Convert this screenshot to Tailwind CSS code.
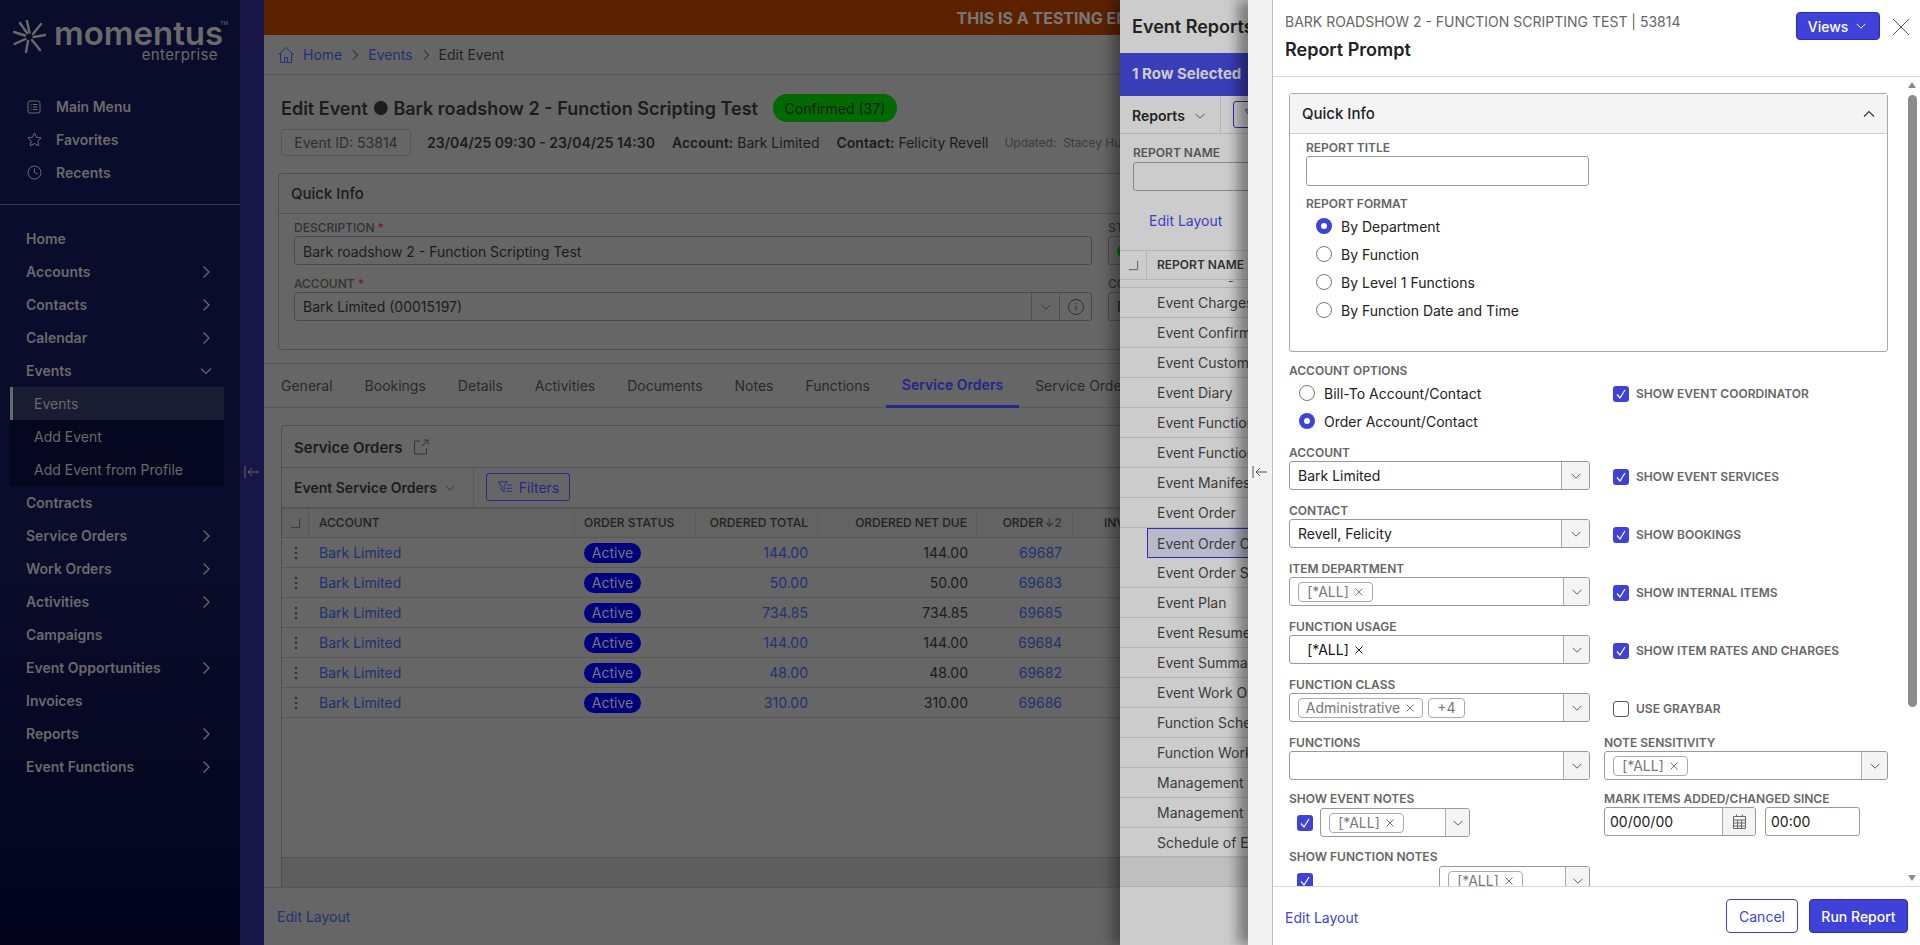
<!DOCTYPE html>
<html lang="en">
<head>
  <meta charset="UTF-8">
  <title>Edit Event - Report Prompt</title>
  <script src="https://cdn.jsdelivr.net/npm/@tailwindcss/browser@4"></script>
</head>
<body class="h-[945px] w-[1920px] overflow-hidden relative flex [font-family:Inter,sans-serif] text-[14px] bg-[#666]">
  <!-- icon sprite -->
  <svg class="hidden">
    <symbol id="chev-d" viewBox="0 0 16 16"><path d="M3 5.500l5 5 5-5" fill="none" stroke="currentColor" stroke-width="1.100"/></symbol>
    <symbol id="chev-u" viewBox="0 0 16 16"><path d="M3 10.500l5-5 5 5" fill="none" stroke="currentColor" stroke-width="1.100"/></symbol>
    <symbol id="chev-r" viewBox="0 0 16 16"><path d="M5.500 2.500l5.500 5.500-5.500 5.500" fill="none" stroke="currentColor" stroke-width="1.300"/></symbol>
    <symbol id="times" viewBox="0 0 10 10"><path d="M1.500 1.500l7 7M8.500 1.500l-7 7" fill="none" stroke="currentColor" stroke-width="1"/></symbol>
    <symbol id="check" viewBox="0 0 16 16"><path d="M4 8.500l3 3.500 5-8" fill="none" stroke="#fff" stroke-width="1.200"/></symbol>
    <symbol id="collapse" viewBox="0 0 16 14"><path d="M1 1v12M15 7H4M8 3L4 7l4 4" fill="none" stroke="currentColor" stroke-width="1"/></symbol>
    <symbol id="corner" viewBox="0 0 12 12"><path d="M1 10.500h9.500V1" fill="none" stroke="currentColor" stroke-width="1"/></symbol>
    <symbol id="filter" viewBox="0 0 18 16"><path d="M1.500 2h10L8 7.500V13l-3-1.500v-4zM12 6h5M10.500 9.500H17M10 13h7" fill="none" stroke="currentColor" stroke-width="1"/></symbol>
    <symbol id="kebab" viewBox="0 0 4 14"><circle cx="2" cy="2" r="1.100" fill="currentColor"/><circle cx="2" cy="7" r="1.100" fill="currentColor"/><circle cx="2" cy="12" r="1.100" fill="currentColor"/></symbol>
  </svg>

  <!-- sidebar -->
  <aside class="w-[240px] h-full shrink-0 bg-gradient-to-b from-[#0a0c2b] from-60% to-[#03041c] text-[#6a6a6a]">
    <div class="h-[90px] pl-[13px] pt-[20px] flex items-start">
      <svg class="w-[33px] h-[33px] shrink-0" viewBox="0 0 33 33">
        <g stroke="#6a6a6a" stroke-width="2.400" stroke-linecap="round">
          <path d="M16.500 12.500L14 1M20 14l8-10M20.500 17l12-2M19 20l8 10M15 21l-2 11M12.500 19l-11 5M12 15.500L1 12M14 13L7 3"/>
        </g>
      </svg>
      <div class="ml-[8px] w-[166px] flex flex-col items-end relative">
        <div class="w-full text-[33px] leading-[26px] font-semibold">momentus</div>
        <div class="text-[15px] leading-[15px] mt-[1px] mr-[2px] tracking-[0.4px]">enterprise</div>
        <div class="absolute right-[-8px] top-0 text-[5px] leading-[6px]">TM</div>
      </div>
    </div>
    <nav class="font-semibold border-b border-[#3a3b50] pb-[15px]">
      <a class="h-[33px] pl-[27px] flex items-center gap-[15px]">
        <svg class="w-[14px] h-[14px] shrink-0" viewBox="0 0 14 14"><rect x="1" y="1" width="12" height="12" rx="2" fill="none" stroke="currentColor"/><path d="M3.500 4.500h1M6 4.500h4.500M3.500 7h1M6 7h4.500M3.500 9.500h1M6 9.500h4.500" stroke="currentColor"/></svg>Main Menu</a>
      <a class="h-[33px] pl-[27px] flex items-center gap-[14px]">
        <svg class="w-[15px] h-[15px] shrink-0" viewBox="0 0 15 15"><path d="M7.500 1l2 4.300 4.700.6-3.400 3.200.9 4.700-4.200-2.300-4.200 2.300.9-4.700L.8 5.900l4.700-.6z" fill="none" stroke="currentColor"/></svg>Favorites</a>
      <a class="h-[33px] pl-[27px] flex items-center gap-[14px]">
        <svg class="w-[15px] h-[15px] shrink-0" viewBox="0 0 15 15"><circle cx="7.500" cy="7.500" r="6.500" fill="none" stroke="currentColor"/><path d="M7.500 3.500v4l3 1.500" fill="none" stroke="currentColor"/></svg>Recents</a>
    </nav>
    <nav class="pt-[17px] font-semibold">
      <a class="h-[33px] pl-[26px] flex items-center">Home</a>
      <a class="h-[33px] pl-[26px] pr-[26px] flex items-center justify-between">Accounts<svg class="w-[16px] h-[16px]"><use href="#chev-r"/></svg></a>
      <a class="h-[33px] pl-[26px] pr-[26px] flex items-center justify-between">Contacts<svg class="w-[16px] h-[16px]"><use href="#chev-r"/></svg></a>
      <a class="h-[33px] pl-[26px] pr-[26px] flex items-center justify-between">Calendar<svg class="w-[16px] h-[16px]"><use href="#chev-r"/></svg></a>
      <a class="h-[33px] pl-[26px] pr-[26px] flex items-center justify-between">Events<svg class="w-[16px] h-[16px]"><use href="#chev-d"/></svg></a>
      <div class="mx-[10px] w-[214px] bg-[#05061f] font-normal">
        <a class="h-[33px] pl-[21px] flex items-center bg-[#1a1c31] border-l-[3px] border-[#6a6a6a]">Events</a>
        <a class="h-[33px] pl-[24px] flex items-center">Add Event</a>
        <a class="h-[33px] pl-[24px] flex items-center">Add Event from Profile</a>
      </div>
      <a class="h-[33px] pl-[26px] flex items-center">Contracts</a>
      <a class="h-[33px] pl-[26px] pr-[26px] flex items-center justify-between">Service Orders<svg class="w-[16px] h-[16px]"><use href="#chev-r"/></svg></a>
      <a class="h-[33px] pl-[26px] pr-[26px] flex items-center justify-between">Work Orders<svg class="w-[16px] h-[16px]"><use href="#chev-r"/></svg></a>
      <a class="h-[33px] pl-[26px] pr-[26px] flex items-center justify-between">Activities<svg class="w-[16px] h-[16px]"><use href="#chev-r"/></svg></a>
      <a class="h-[33px] pl-[26px] flex items-center">Campaigns</a>
      <a class="h-[33px] pl-[26px] pr-[26px] flex items-center justify-between">Event Opportunities<svg class="w-[16px] h-[16px]"><use href="#chev-r"/></svg></a>
      <a class="h-[33px] pl-[26px] flex items-center">Invoices</a>
      <a class="h-[33px] pl-[26px] pr-[26px] flex items-center justify-between">Reports<svg class="w-[16px] h-[16px]"><use href="#chev-r"/></svg></a>
      <a class="h-[33px] pl-[26px] pr-[26px] flex items-center justify-between">Event Functions<svg class="w-[16px] h-[16px]"><use href="#chev-r"/></svg></a>
    </nav>
  </aside>

  <!-- collapse strip -->
  <div class="w-[24px] h-full shrink-0 bg-[#181548] text-[#666] flex justify-center pt-[465px]">
    <svg class="w-[16px] h-[14px]"><use href="#collapse"/></svg>
  </div>

  <!-- event page, dimmed -->
  <main class="w-[1656px] h-full shrink-0 flex flex-col text-[#1c1c1c]">
    <div class="h-[35px] shrink-0 bg-[#5c2200] flex items-center justify-center text-[16px] font-bold text-[#777]">THIS IS A TESTING ENVIRONMENT</div>
    <div class="h-[40px] shrink-0 border-b border-[#585858] pl-[13px] flex items-center text-[#1f3272]">
      <svg class="w-[18px] h-[18px] mr-[8px]" viewBox="0 0 18 18"><path d="M1 9l8-7.500L17 9M3.500 7.500V16.500h11V7.500M7.500 16.500v-5h3v5" fill="none" stroke="currentColor"/></svg>
      <span>Home</span>
      <svg class="w-[14px] h-[14px] mx-[6px] text-[#3a3a3a]"><use href="#chev-r"/></svg>
      <span>Events</span>
      <svg class="w-[14px] h-[14px] mx-[6px] text-[#3a3a3a]"><use href="#chev-r"/></svg>
      <span class="text-[#222]">Edit Event</span>
    </div>
    <div class="pl-[17px] pt-[19px]">
      <div class="h-[28px] flex items-center">
        <h1 class="text-[18px] font-semibold">Edit Event ● Bark roadshow 2 - Function Scripting Test</h1>
        <span class="ml-[15px] h-[28px] w-[124px] rounded-[14px] bg-[#006a00] flex items-center justify-center">Confirmed (37)</span>
      </div>
      <div class="mt-[7px] h-[27px] flex items-center">
        <span class="h-[27px] w-[130px] border border-[#565656] rounded-[3px] flex items-center justify-center text-[#2e2e2e]">Event ID: 53814</span>
        <span class="ml-[16px] font-semibold">23/04/25 09:30 - 23/04/25 14:30</span>
        <span class="ml-[17px]"><b class="font-semibold">Account:</b> Bark Limited</span>
        <span class="ml-[17px]"><b class="font-semibold">Contact:</b> Felicity Revell</span>
        <span class="ml-[16px] text-[12px] text-[#3c3c3c]">Updated:&nbsp; Stacey Hughes</span>
      </div>
    </div>
    <section class="mt-[17px] ml-[14px] mr-[20px] h-[177px] shrink-0 border border-[#4e4e4e] rounded-[4px]">
      <div class="h-[40px] border-b border-[#525252] pl-[12px] pt-[2px] flex items-center text-[15px] font-medium">Quick Info</div>
      <div class="pl-[15px] pt-[6px] flex gap-[16px]">
        <div class="w-[798px]">
          <label class="block h-[16px] leading-[16px] text-[12px] font-medium text-[#333]">DESCRIPTION <span class="text-[#7a1c1c]">*</span></label>
          <div class="h-[29px] border border-[#4a4a4a] rounded-[3px] pl-[8px] pt-[2px] flex items-center">Bark roadshow 2 - Function Scripting Test</div>
          <label class="block mt-[11px] h-[16px] leading-[16px] text-[12px] font-medium text-[#333]">ACCOUNT <span class="text-[#7a1c1c]">*</span></label>
          <div class="h-[29px] border border-[#4a4a4a] rounded-[3px] pl-[8px] flex items-center justify-between">Bark Limited (00015197)
            <span class="flex h-full">
              <span class="w-[28px] border-l border-[#4e4e4e] flex items-center justify-center text-[#333]"><svg class="w-[14px] h-[14px]"><use href="#chev-d"/></svg></span>
              <span class="w-[32px] border-l border-[#4e4e4e] flex items-center justify-center text-[#333]"><svg class="w-[18px] h-[18px]" viewBox="0 0 18 18"><circle cx="9" cy="9" r="7.500" fill="none" stroke="currentColor"/><path d="M9 8v5M9 5v1.200" stroke="currentColor"/></svg></span>
            </span>
          </div>
        </div>
        <div class="w-[400px]">
          <label class="block h-[16px] leading-[16px] text-[12px] font-medium text-[#333]">STATUS</label>
          <div class="h-[29px] border border-[#4a4a4a] rounded-[3px] pl-[8px] flex items-center"><span class="w-[12px] h-[12px] rounded-full bg-[#006a00]"></span></div>
          <label class="block mt-[11px] h-[16px] leading-[16px] text-[12px] font-medium text-[#333]">CONTACT</label>
          <div class="h-[29px] border border-[#4a4a4a] rounded-[3px] pl-[8px] flex items-center">Felicity Revell</div>
        </div>
      </div>
    </section>
    <div class="mt-[13px] h-[45px] shrink-0 border-t border-b border-[#585858] pl-[1px] flex items-stretch text-[#2a2a2a]">
      <a class="px-[16px] flex items-center">General</a>
      <a class="px-[16px] flex items-center">Bookings</a>
      <a class="px-[16px] flex items-center">Details</a>
      <a class="px-[16px] flex items-center">Activities</a>
      <a class="px-[16px] flex items-center">Documents</a>
      <a class="px-[16px] flex items-center">Notes</a>
      <a class="px-[16px] flex items-center">Functions</a>
      <a class="px-[16px] flex items-center font-semibold text-[#23268a] border-b-[3px] border-[#23268a] -mb-[1px]">Service Orders</a>
      <a class="px-[16px] flex items-center">Service Order Functions</a>
    </div>
    <section class="mt-[17px] ml-[17px] h-[462px] shrink-0 border-l border-t border-[#4e4e4e] rounded-tl-[4px] flex flex-col">
      <div class="h-[42px] shrink-0 border-b border-[#525252] pl-[12px] pt-[3px] flex items-center text-[15px] font-semibold">Service Orders
        <svg class="ml-[10px] -mt-[3px] w-[16px] h-[16px] text-[#333]" viewBox="0 0 16 16"><path d="M7 2H1.500v13h12V9M9 7l6-6M10.500 1H15v4.500" fill="none" stroke="currentColor"/></svg>
      </div>
      <div class="h-[41px] shrink-0 border-b-[2px] border-[#555] flex">
        <div class="w-[192px] border-r border-[#585858] pl-[12px] flex items-center font-semibold">Event Service Orders<svg class="ml-[6px] w-[14px] h-[14px] text-[#333]"><use href="#chev-d"/></svg></div>
        <div class="ml-[12px] mt-[5px] w-[84px] h-[28px] border border-[#23268a] rounded-[3px] flex items-center justify-center gap-[6px] text-[#23268a]"><svg class="w-[16px] h-[14px]"><use href="#filter"/></svg>Filters</div>
      </div>
      <div class="h-[29px] shrink-0 bg-[#636363] border-b border-[#565656] flex text-[12px] font-medium text-[#222]">
        <div class="w-[27px] border-r border-[#585858] flex items-center justify-center"><svg class="w-[11px] h-[11px] text-[#333]"><use href="#corner"/></svg></div>
        <div class="w-[266px] border-r border-[#5c5c5c] pl-[10px] flex items-center">ACCOUNT</div>
        <div class="w-[121px] border-r border-[#5c5c5c] pl-[9px] flex items-center">ORDER STATUS</div>
        <div class="w-[122px] border-r border-[#5c5c5c] pr-[9px] flex items-center justify-end">ORDERED TOTAL</div>
        <div class="w-[159px] border-r border-[#5c5c5c] pr-[9px] flex items-center justify-end">ORDERED NET DUE</div>
        <div class="w-[96px] border-r border-[#5c5c5c] pr-[10px] flex items-center justify-end">ORDER<span class="ml-[1px] text-[#333]">↓2</span></div>
        <div class="pl-[31px] flex items-center">INVOICED</div>
      </div>
      <div class="h-[30px] shrink-0 border-b border-[#585858] flex items-center text-[#1f3272]"><span class="w-[27px] flex justify-center text-[#222]"><svg class="w-[4px] h-[14px]"><use href="#kebab"/></svg></span><a class="w-[266px] pl-[10px]">Bark Limited</a><span class="w-[121px] pl-[9px]"><span class="inline-flex h-[20px] w-[57px] items-center justify-center rounded-[10px] bg-[#00007e] text-[#777]">Active</span></span><a class="w-[122px] pr-[10px] text-right">144.00</a><span class="w-[159px] pr-[9px] text-right text-[#1c1c1c]">144.00</span><a class="w-[96px] pr-[11px] text-right">69687</a></div>
      <div class="h-[30px] shrink-0 border-b border-[#585858] flex items-center text-[#1f3272]"><span class="w-[27px] flex justify-center text-[#222]"><svg class="w-[4px] h-[14px]"><use href="#kebab"/></svg></span><a class="w-[266px] pl-[10px]">Bark Limited</a><span class="w-[121px] pl-[9px]"><span class="inline-flex h-[20px] w-[57px] items-center justify-center rounded-[10px] bg-[#00007e] text-[#777]">Active</span></span><a class="w-[122px] pr-[10px] text-right">50.00</a><span class="w-[159px] pr-[9px] text-right text-[#1c1c1c]">50.00</span><a class="w-[96px] pr-[11px] text-right">69683</a></div>
      <div class="h-[30px] shrink-0 border-b border-[#585858] flex items-center text-[#1f3272]"><span class="w-[27px] flex justify-center text-[#222]"><svg class="w-[4px] h-[14px]"><use href="#kebab"/></svg></span><a class="w-[266px] pl-[10px]">Bark Limited</a><span class="w-[121px] pl-[9px]"><span class="inline-flex h-[20px] w-[57px] items-center justify-center rounded-[10px] bg-[#00007e] text-[#777]">Active</span></span><a class="w-[122px] pr-[10px] text-right">734.85</a><span class="w-[159px] pr-[9px] text-right text-[#1c1c1c]">734.85</span><a class="w-[96px] pr-[11px] text-right">69685</a></div>
      <div class="h-[30px] shrink-0 border-b border-[#585858] flex items-center text-[#1f3272]"><span class="w-[27px] flex justify-center text-[#222]"><svg class="w-[4px] h-[14px]"><use href="#kebab"/></svg></span><a class="w-[266px] pl-[10px]">Bark Limited</a><span class="w-[121px] pl-[9px]"><span class="inline-flex h-[20px] w-[57px] items-center justify-center rounded-[10px] bg-[#00007e] text-[#777]">Active</span></span><a class="w-[122px] pr-[10px] text-right">144.00</a><span class="w-[159px] pr-[9px] text-right text-[#1c1c1c]">144.00</span><a class="w-[96px] pr-[11px] text-right">69684</a></div>
      <div class="h-[30px] shrink-0 border-b border-[#585858] flex items-center text-[#1f3272]"><span class="w-[27px] flex justify-center text-[#222]"><svg class="w-[4px] h-[14px]"><use href="#kebab"/></svg></span><a class="w-[266px] pl-[10px]">Bark Limited</a><span class="w-[121px] pl-[9px]"><span class="inline-flex h-[20px] w-[57px] items-center justify-center rounded-[10px] bg-[#00007e] text-[#777]">Active</span></span><a class="w-[122px] pr-[10px] text-right">48.00</a><span class="w-[159px] pr-[9px] text-right text-[#1c1c1c]">48.00</span><a class="w-[96px] pr-[11px] text-right">69682</a></div>
      <div class="h-[30px] shrink-0 border-b border-[#585858] flex items-center text-[#1f3272]"><span class="w-[27px] flex justify-center text-[#222]"><svg class="w-[4px] h-[14px]"><use href="#kebab"/></svg></span><a class="w-[266px] pl-[10px]">Bark Limited</a><span class="w-[121px] pl-[9px]"><span class="inline-flex h-[20px] w-[57px] items-center justify-center rounded-[10px] bg-[#00007e] text-[#777]">Active</span></span><a class="w-[122px] pr-[10px] text-right">310.00</a><span class="w-[159px] pr-[9px] text-right text-[#1c1c1c]">310.00</span><a class="w-[96px] pr-[11px] text-right">69686</a></div>
      <div class="flex-1"></div>
      <div class="h-[30px] shrink-0 bg-[#5e5e5e] border-t border-[#525252]"></div>
    </section>
    <div class="flex-1 border-t border-[#575757] pl-[13px] pt-[18px] text-[#1f3272]">Edit Layout</div>
  </main>

  <!-- first slide-over: event reports -->
  <div class="absolute left-[1120px] top-0 w-[128px] h-full overflow-hidden bg-[#ccc] shadow-[-8px_0_12px_rgba(0,0,0,0.35)] text-[#222]">
    <div class="w-[500px]">
      <h2 class="h-[53px] pl-[12px] flex items-center text-[18px] font-semibold">Event Reports</h2>
      <div class="h-[43px] bg-[#3a3db8] pl-[12px] flex items-center text-[15px] font-bold text-[#ccc]">1 Row Selected</div>
      <div class="h-[38px] border-b border-[#b4b4b4] flex">
        <div class="w-[101px] border-r border-[#b4b4b4] pl-[12px] pt-[2px] flex items-center font-semibold">Reports<svg class="ml-[8px] w-[14px] h-[14px] text-[#555]"><use href="#chev-d"/></svg></div>
        <div class="ml-[12px] mt-[5px] w-[84px] h-[27px] border border-[#2e30b0] rounded-[3px] flex items-center pl-[10px] text-[#2e30b0]"><svg class="w-[16px] h-[14px]"><use href="#filter"/></svg></div>
      </div>
      <label class="block mt-[11px] ml-[13px] h-[16px] leading-[16px] text-[12px] font-semibold text-[#555]">REPORT NAME</label>
      <div class="mt-[1px] ml-[13px] h-[29px] w-[300px] border border-[#888] rounded-[3px]"></div>
      <a class="block mt-[21px] ml-[29px] h-[17px] leading-[17px] text-[#3e40c0]">Edit Layout</a>
      <div class="mt-[21px] h-[30px] border-t border-b border-[#b4b4b4] flex text-[12px] font-semibold text-[#333]">
        <div class="w-[27px] border-r border-[#b4b4b4] flex items-center justify-center"><svg class="w-[11px] h-[11px] text-[#555]"><use href="#corner"/></svg></div>
        <div class="pl-[10px] flex items-center">REPORT NAME</div>
      </div>
      <div class="h-[8px] pl-[108px] text-[12px] leading-[2px] border-b border-[#b4b4b4] overflow-hidden text-[#444]">-</div>
      <div class="text-[#3c3c3c]">
        <div class="h-[30px] pl-[37px] flex items-center border-b border-[#b4b4b4]">Event Charges</div>
        <div class="h-[30px] pl-[37px] flex items-center border-b border-[#b4b4b4]">Event Confirmation</div>
        <div class="h-[30px] pl-[37px] flex items-center border-b border-[#b4b4b4]">Event Customer Summary</div>
        <div class="h-[30px] pl-[37px] flex items-center border-b border-[#b4b4b4]">Event Diary</div>
        <div class="h-[30px] pl-[37px] flex items-center border-b border-[#b4b4b4]">Event Function Summary</div>
        <div class="h-[30px] pl-[37px] flex items-center border-b border-[#b4b4b4]">Event Function Detail</div>
        <div class="h-[30px] pl-[37px] flex items-center border-b border-[#b4b4b4]">Event Manifest</div>
        <div class="h-[30px] pl-[37px] flex items-center border-b border-[#b4b4b4]">Event Order</div>
        <div class="h-[30px] ml-[27px] pl-[9px] flex items-center border border-[#2e30b0] bg-[#b9b9cb]">Event Order Confirmation</div>
        <div class="h-[30px] pl-[37px] flex items-center border-b border-[#b4b4b4]">Event Order Summary</div>
        <div class="h-[30px] pl-[37px] flex items-center border-b border-[#b4b4b4]">Event Plan</div>
        <div class="h-[30px] pl-[37px] flex items-center border-b border-[#b4b4b4]">Event Resume</div>
        <div class="h-[30px] pl-[37px] flex items-center border-b border-[#b4b4b4]">Event Summary</div>
        <div class="h-[30px] pl-[37px] flex items-center border-b border-[#b4b4b4]">Event Work Order</div>
        <div class="h-[30px] pl-[37px] flex items-center border-b border-[#b4b4b4]">Function Schedule</div>
        <div class="h-[30px] pl-[37px] flex items-center border-b border-[#b4b4b4]">Function Work Order</div>
        <div class="h-[30px] pl-[37px] flex items-center border-b border-[#b4b4b4]">Management Report</div>
        <div class="h-[30px] pl-[37px] flex items-center border-b border-[#b4b4b4]">Management Summary</div>
        <div class="h-[30px] pl-[37px] flex items-center border-b-[2px] border-[#b4b4b4]">Schedule of Events</div>
      </div>
      <div class="h-[29px] bg-[#bfbfbf] border-b border-[#b0b0b0]"></div>
    </div>
  </div>

  <!-- second slide-over: report prompt -->
  <div class="absolute left-[1248px] top-0 w-[672px] h-full flex bg-white shadow-[-10px_0_12px_rgba(0,0,0,0.4)]">
    <div class="w-[25px] h-full shrink-0 bg-[#f3f3f3] border-r border-[#bdbdbd] text-[#555] flex justify-center pt-[465px]">
      <svg class="w-[16px] h-[14px]"><use href="#collapse"/></svg>
    </div>
    <div class="flex-1 min-w-0 flex flex-col">
      <header class="h-[77px] shrink-0 border-b border-[#d6d6d6] pl-[12px] pr-[10px] flex justify-between">
        <div class="pt-[13px]">
          <div class="h-[18px] leading-[18px] text-[#666]">BARK ROADSHOW 2 - FUNCTION SCRIPTING TEST | 53814</div>
          <h2 class="mt-[7px] h-[24px] leading-[24px] text-[18px] font-semibold text-[#222]">Report Prompt</h2>
        </div>
        <div class="pt-[12px] flex items-start gap-[12px]">
          <button class="w-[84px] h-[28px] bg-[#3f42d9] border border-[#2a2cb8] rounded-[4px] text-white font-medium flex items-center justify-center gap-[6px]">Views<svg class="w-[14px] h-[14px]"><use href="#chev-d"/></svg></button>
          <svg class="mt-[6px] w-[18px] h-[18px] text-[#555]" viewBox="0 0 18 18"><path d="M1 1l16 16M17 1L1 17" fill="none" stroke="currentColor"/></svg>
        </div>
      </header>

      <div class="relative flex-1 min-h-0 overflow-hidden">
        <div class="pl-[16px] pt-[16px] w-[615px] text-[#222]">
          <!-- quick info -->
          <section class="w-[599px] h-[259px] border border-[#aaa] rounded-[3px]">
            <div class="h-[40px] bg-[#f4f4f4] border-b border-[#d0d0d0] pl-[12px] pr-[10px] pt-[1px] flex items-center justify-between text-[15px] font-medium">Quick Info<svg class="w-[16px] h-[16px] text-[#333]"><use href="#chev-u"/></svg></div>
            <div class="pl-[16px]">
              <label class="block mt-[6px] h-[16px] leading-[16px] text-[12px] font-semibold text-[#666]">REPORT TITLE</label>
              <div class="w-[283px] h-[30px] border border-[#999] rounded-[3px]"></div>
              <label class="block mt-[10px] h-[16px] leading-[16px] text-[12px] font-semibold text-[#666]">REPORT FORMAT</label>
              <div class="pl-[10px]">
                <div class="h-[28px] flex items-center gap-[9px]"><span class="w-[16px] h-[16px] rounded-full bg-[#3f42d9] flex items-center justify-center"><span class="w-[6px] h-[6px] rounded-full bg-white"></span></span>By Department</div>
                <div class="h-[28px] flex items-center gap-[9px]"><span class="w-[16px] h-[16px] rounded-full border border-[#777]"></span>By Function</div>
                <div class="h-[28px] flex items-center gap-[9px]"><span class="w-[16px] h-[16px] rounded-full border border-[#777]"></span>By Level 1 Functions</div>
                <div class="h-[28px] flex items-center gap-[9px]"><span class="w-[16px] h-[16px] rounded-full border border-[#777]"></span>By Function Date and Time</div>
              </div>
            </div>
          </section>

          <!-- form grid -->
          <div class="mt-[11px] grid grid-cols-[301px_284px] gap-x-[14px]">
            <div>
              <label class="block h-[16px] leading-[16px] text-[12px] font-semibold text-[#666]">ACCOUNT OPTIONS</label>
              <div class="pl-[10px]">
                <div class="h-[28px] flex items-center gap-[9px]"><span class="w-[16px] h-[16px] rounded-full border border-[#777]"></span>Bill-To Account/Contact</div>
                <div class="h-[28px] flex items-center gap-[9px]"><span class="w-[16px] h-[16px] rounded-full bg-[#3f42d9] flex items-center justify-center"><span class="w-[6px] h-[6px] rounded-full bg-white"></span></span>Order Account/Contact</div>
              </div>
            </div>
            <div class="pl-[9px] pt-[23px] flex items-start gap-[7px] text-[12px] font-semibold text-[#666] leading-[16px]"><svg class="w-[16px] h-[16px] rounded-[3px] bg-[#3f42d9]"><use href="#check"/></svg>SHOW EVENT COORDINATOR</div>

            <div class="mt-[10px]">
              <label class="block h-[16px] leading-[16px] text-[12px] font-semibold text-[#666]">ACCOUNT</label>
              <div class="h-[29px] border border-[#999] rounded-[3px] pl-[8px] flex items-center justify-between">Bark Limited<span class="w-[28px] h-full bg-[#f4f4f4] border-l border-[#aaa] rounded-r-[3px] flex items-center justify-center text-[#555]"><svg class="w-[14px] h-[14px]"><use href="#chev-d"/></svg></span></div>
            </div>
            <div class="pl-[9px] pb-[5px] flex items-end gap-[7px] text-[12px] font-semibold text-[#666] leading-[16px]"><svg class="w-[16px] h-[16px] rounded-[3px] bg-[#3f42d9]"><use href="#check"/></svg>SHOW EVENT SERVICES</div>

            <div class="mt-[13px]">
              <label class="block h-[16px] leading-[16px] text-[12px] font-semibold text-[#666]">CONTACT</label>
              <div class="h-[29px] border border-[#999] rounded-[3px] pl-[8px] flex items-center justify-between">Revell, Felicity<span class="w-[28px] h-full bg-[#f4f4f4] border-l border-[#aaa] rounded-r-[3px] flex items-center justify-center text-[#555]"><svg class="w-[14px] h-[14px]"><use href="#chev-d"/></svg></span></div>
            </div>
            <div class="pl-[9px] pb-[5px] flex items-end gap-[7px] text-[12px] font-semibold text-[#666] leading-[16px]"><svg class="w-[16px] h-[16px] rounded-[3px] bg-[#3f42d9]"><use href="#check"/></svg>SHOW BOOKINGS</div>

            <div class="mt-[13px]">
              <label class="block h-[16px] leading-[16px] text-[12px] font-semibold text-[#666]">ITEM DEPARTMENT</label>
              <div class="h-[29px] border border-[#999] rounded-[3px] pl-[8px] flex items-center justify-between"><span class="h-[20px] w-[75px] border border-[#aaa] rounded-[4px] text-[#777] flex items-center justify-center gap-[5px]">[*ALL]<svg class="w-[10px] h-[10px]"><use href="#times"/></svg></span><span class="w-[26px] h-full bg-[#f4f4f4] border-l border-[#aaa] rounded-r-[3px] flex items-center justify-center text-[#555]"><svg class="w-[14px] h-[14px]"><use href="#chev-d"/></svg></span></div>
            </div>
            <div class="pl-[9px] pb-[5px] flex items-end gap-[7px] text-[12px] font-semibold text-[#666] leading-[16px]"><svg class="w-[16px] h-[16px] rounded-[3px] bg-[#3f42d9]"><use href="#check"/></svg>SHOW INTERNAL ITEMS</div>

            <div class="mt-[13px]">
              <label class="block h-[16px] leading-[16px] text-[12px] font-semibold text-[#666]">FUNCTION USAGE</label>
              <div class="h-[29px] border border-[#999] rounded-[3px] pl-[8px] flex items-center justify-between"><span class="h-[20px] w-[75px] text-[#111] flex items-center justify-center gap-[5px]">[*ALL]<svg class="w-[10px] h-[10px]"><use href="#times"/></svg></span><span class="w-[26px] h-full bg-[#f4f4f4] border-l border-[#aaa] rounded-r-[3px] flex items-center justify-center text-[#555]"><svg class="w-[14px] h-[14px]"><use href="#chev-d"/></svg></span></div>
            </div>
            <div class="pl-[9px] pb-[5px] flex items-end gap-[7px] text-[12px] font-semibold text-[#666] leading-[16px]"><svg class="w-[16px] h-[16px] rounded-[3px] bg-[#3f42d9]"><use href="#check"/></svg>SHOW ITEM RATES AND CHARGES</div>

            <div class="mt-[13px]">
              <label class="block h-[16px] leading-[16px] text-[12px] font-semibold text-[#666]">FUNCTION CLASS</label>
              <div class="h-[29px] border border-[#999] rounded-[3px] pl-[8px] flex items-center"><span class="h-[20px] w-[125px] border border-[#aaa] rounded-[4px] text-[#777] flex items-center justify-center gap-[5px]">Administrative<svg class="w-[10px] h-[10px]"><use href="#times"/></svg></span><span class="ml-[5px] h-[20px] w-[37px] border border-[#aaa] rounded-[4px] text-[#777] flex items-center justify-center">+4</span><span class="ml-auto w-[26px] h-full bg-[#f4f4f4] border-l border-[#aaa] rounded-r-[3px] flex items-center justify-center text-[#555]"><svg class="w-[14px] h-[14px]"><use href="#chev-d"/></svg></span></div>
            </div>
            <div class="pl-[9px] pb-[5px] flex items-end gap-[7px] text-[12px] font-semibold text-[#666] leading-[16px]"><span class="w-[16px] h-[16px] rounded-[3px] border border-[#555]"></span>USE GRAYBAR</div>

            <div class="mt-[13px]">
              <label class="block h-[16px] leading-[16px] text-[12px] font-semibold text-[#666]">FUNCTIONS</label>
              <div class="h-[29px] border border-[#999] rounded-[3px] flex justify-end"><span class="w-[26px] h-full bg-[#f4f4f4] border-l border-[#aaa] rounded-r-[3px] flex items-center justify-center text-[#555]"><svg class="w-[14px] h-[14px]"><use href="#chev-d"/></svg></span></div>
            </div>
            <div class="mt-[13px]">
              <label class="block h-[16px] leading-[16px] text-[12px] font-semibold text-[#666]">NOTE SENSITIVITY</label>
              <div class="h-[29px] border border-[#999] rounded-[3px] pl-[8px] flex items-center justify-between"><span class="h-[20px] w-[75px] border border-[#aaa] rounded-[4px] text-[#777] flex items-center justify-center gap-[5px]">[*ALL]<svg class="w-[10px] h-[10px]"><use href="#times"/></svg></span><span class="w-[26px] h-full bg-[#f4f4f4] border-l border-[#aaa] rounded-r-[3px] flex items-center justify-center text-[#555]"><svg class="w-[14px] h-[14px]"><use href="#chev-d"/></svg></span></div>
            </div>

            <div class="mt-[11px]">
              <label class="block h-[16px] leading-[16px] text-[12px] font-semibold text-[#666]">SHOW EVENT NOTES</label>
              <div class="pl-[8px] pt-[1px] flex items-center gap-[7px]">
                <svg class="w-[16px] h-[16px] rounded-[3px] bg-[#3f42d9]"><use href="#check"/></svg>
                <div class="w-[150px] h-[29px] border border-[#999] rounded-[3px] pl-[8px] flex items-center justify-between"><span class="h-[20px] w-[75px] border border-[#aaa] rounded-[4px] text-[#777] flex items-center justify-center gap-[5px]">[*ALL]<svg class="w-[10px] h-[10px]"><use href="#times"/></svg></span><span class="w-[24px] h-full bg-[#f4f4f4] border-l border-[#aaa] rounded-r-[3px] flex items-center justify-center text-[#555]"><svg class="w-[14px] h-[14px]"><use href="#chev-d"/></svg></span></div>
              </div>
            </div>
            <div class="mt-[11px]">
              <label class="block h-[16px] leading-[16px] text-[12px] font-semibold text-[#666]">MARK ITEMS ADDED/CHANGED SINCE</label>
              <div class="flex gap-[9px]">
                <div class="w-[152px] h-[29px] border border-[#999] rounded-[3px] pl-[5px] flex items-center justify-between">00/00/00<span class="w-[33px] h-full bg-[#f4f4f4] border-l border-[#aaa] rounded-r-[3px] flex items-center justify-center text-[#666]"><svg class="w-[15px] h-[17px]" viewBox="0 0 15 17"><path d="M1.500 3.500h12v12h-12zM1.500 7h12M1.500 10h12M1.500 13h12M5.500 7v8.500M9.500 7v8.500M4.500 1.500v2M10.500 1.500v2" fill="none" stroke="currentColor"/></svg></span></div>
                <div class="w-[95px] h-[29px] border border-[#999] rounded-[3px] pl-[5px] flex items-center">00:00</div>
              </div>
            </div>

            <div class="mt-[12px] col-span-1">
              <label class="block h-[16px] leading-[16px] text-[12px] font-semibold text-[#666]">SHOW FUNCTION NOTES</label>
              <div class="pl-[8px] pt-[1px] flex items-center justify-between">
                <svg class="w-[16px] h-[16px] rounded-[3px] bg-[#3f42d9]"><use href="#check"/></svg>
                <div class="w-[151px] h-[29px] border border-[#999] rounded-[3px] pl-[8px] flex items-center justify-between"><span class="h-[20px] w-[75px] border border-[#aaa] rounded-[4px] text-[#777] flex items-center justify-center gap-[5px]">[*ALL]<svg class="w-[10px] h-[10px]"><use href="#times"/></svg></span><span class="w-[24px] h-full bg-[#f4f4f4] border-l border-[#aaa] rounded-r-[3px] flex items-center justify-center text-[#555]"><svg class="w-[14px] h-[14px]"><use href="#chev-d"/></svg></span></div>
              </div>
            </div>
          </div>
        </div>
        <!-- scrollbar -->
        <div class="absolute right-0 top-0 bottom-0 w-[13px] bg-white flex flex-col items-center pr-[3px]">
          <div class="mt-[5px] w-0 h-0 border-x-[4px] border-x-transparent border-b-[6px] border-b-[#8c8c8c]"></div>
          <div class="mt-[7px] w-[9px] h-[612px] rounded-[5px] bg-[#8c8c8c]"></div>
          <div class="mt-auto mb-[5px] w-0 h-0 border-x-[4px] border-x-transparent border-t-[6px] border-t-[#8c8c8c]"></div>
        </div>
      </div>

      <footer class="h-[59px] shrink-0 border-t border-[#d6d6d6] pl-[12px] pr-[12px] flex items-start justify-between">
        <a class="mt-[20px] text-[#4044dd]">Edit Layout</a>
        <div class="mt-[12px] flex gap-[11px]">
          <button class="w-[72px] h-[34px] border border-[#3f42d9] rounded-[4px] text-[#3f42d9] bg-white">Cancel</button>
          <button class="w-[99px] h-[34px] bg-[#3f42d9] border border-[#2a2cb8] rounded-[4px] text-white font-medium">Run Report</button>
        </div>
      </footer>
    </div>
  </div>
</body>
</html>
